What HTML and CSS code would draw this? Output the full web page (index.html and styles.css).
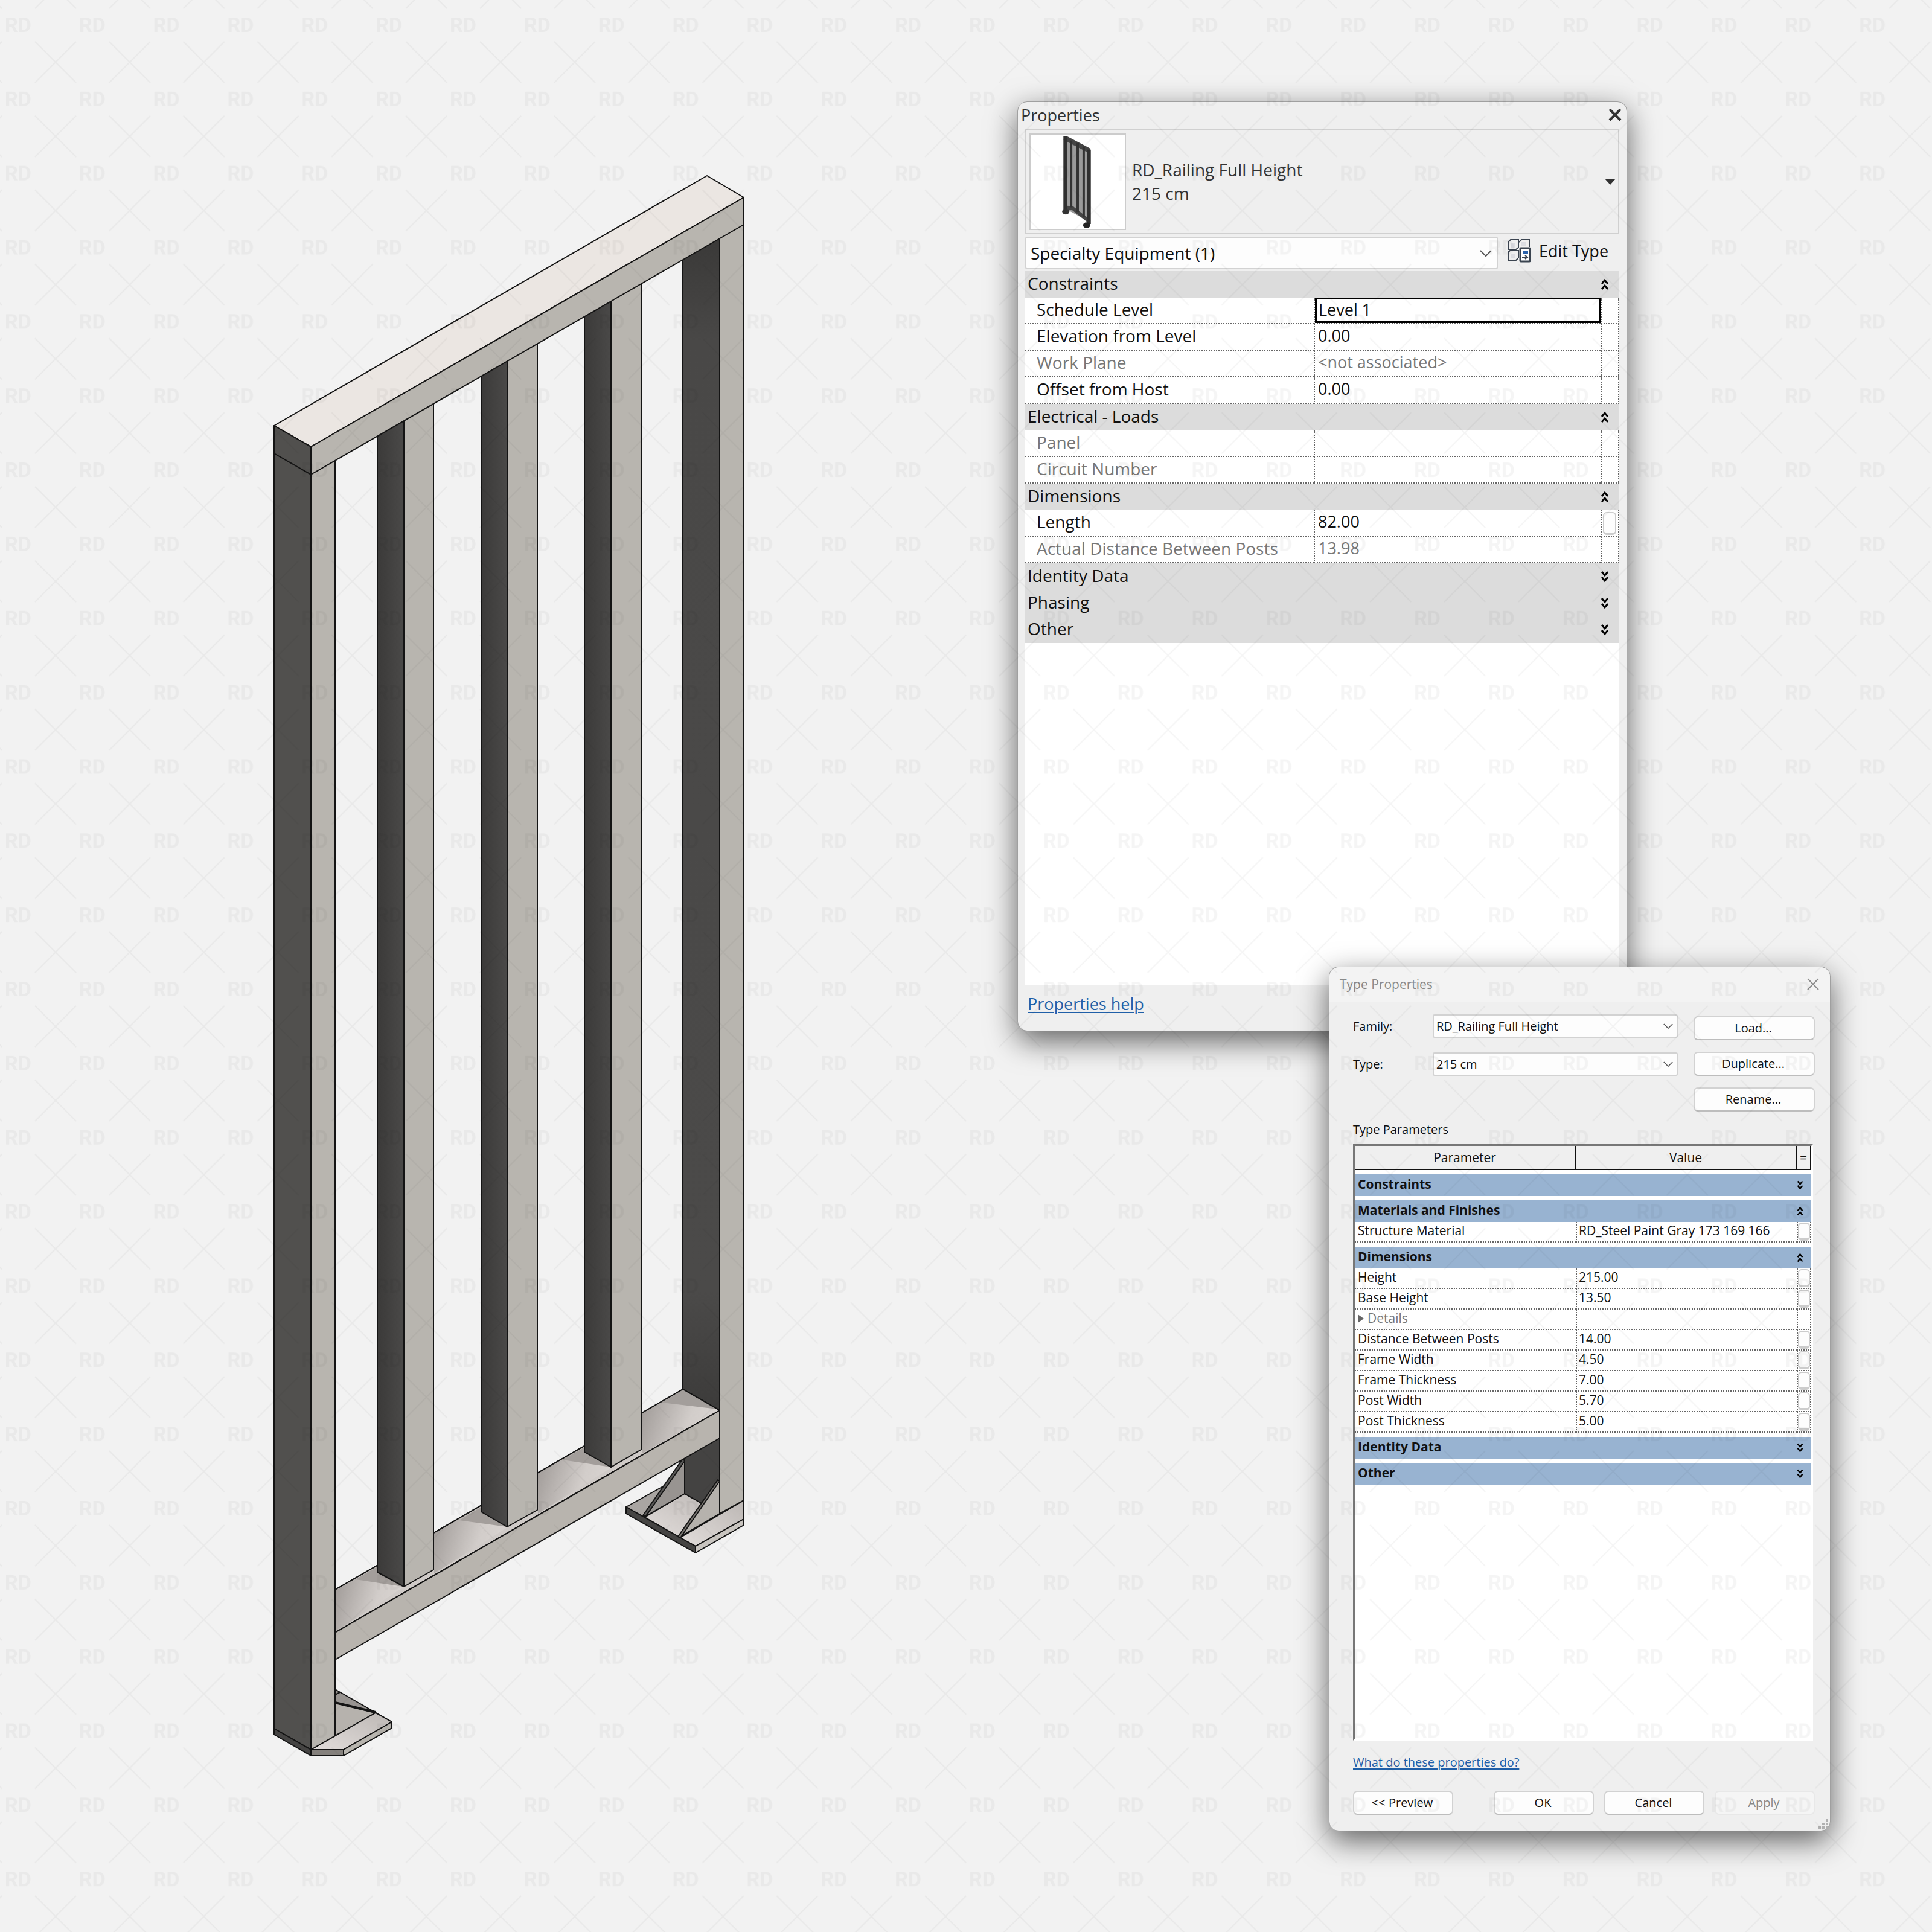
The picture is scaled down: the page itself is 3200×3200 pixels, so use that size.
FILE: index.html
```html
<!DOCTYPE html>
<html lang="en">
<head>
    <meta charset="UTF-8">
    <meta name="viewport" content="width=device-width, initial-scale=1.0">
    <title>RD_Railing Full Height</title>
    <link rel="stylesheet" href="styles.css">
</head>
<body>
    <!-- Shared icons -->
    <svg class="sprite" aria-hidden="true">
        <symbol id="collapse" viewBox="0 0 14 20" preserveAspectRatio="none">
            <path d="M2 9 L7 3 L12 9 M2 18 L7 12 L12 18" fill="none" stroke="#000" stroke-width="3"/>
        </symbol>
        <symbol id="expand" viewBox="0 0 14 20" preserveAspectRatio="none">
            <path d="M2 2 L7 8 L12 2 M2 11 L7 17 L12 11" fill="none" stroke="#000" stroke-width="3"/>
        </symbol>
        <symbol id="caret" viewBox="0 0 20 12">
            <path d="M1 1 L10 10 L19 1" fill="none" stroke="#555" stroke-width="2"/>
        </symbol>
    </svg>

    <main class="scene">
        <!-- 3D view of the railing -->
        <svg class="railing" viewBox="440 280 800 2640" role="img" aria-label="Full height railing">
            <defs>
                <linearGradient id="dark" x1="0" x2="1" y1="0" y2="0">
                    <stop offset="0" stop-color="#3b3a39"/>
                    <stop offset="1" stop-color="#4a4948"/>
                </linearGradient>
                <linearGradient id="post" x1="0" x2="0" y1="0" y2="1">
                    <stop offset="0" stop-color="#383736"/>
                    <stop offset="0.1" stop-color="#494847"/>
                    <stop offset="0.9" stop-color="#4b4a49"/>
                    <stop offset="1" stop-color="#3c3b3a"/>
                </linearGradient>
                <linearGradient id="ledge" x1="0" x2="1" y1="0" y2="0.3">
                    <stop offset="0" stop-color="#9b9693"/>
                    <stop offset="0.7" stop-color="#d2cdca"/>
                    <stop offset="1" stop-color="#d8d3d0"/>
                </linearGradient>
                <linearGradient id="plate" x1="0" x2="1" y1="1" y2="0">
                    <stop offset="0" stop-color="#e2dddb"/>
                    <stop offset="1" stop-color="#bcb7b4"/>
                </linearGradient>
            </defs>
            <g stroke="#141414" stroke-width="2" stroke-linejoin="round">
                <!-- right base -->
                <path d="M1037 2496 L1134 2442 L1232 2485 L1232 2516 L1152 2561 Z" fill="#a9a5a2"/>
                <path d="M1068 2513 L1134 2474 L1192 2507 L1126 2547 Z" fill="url(#plate)"/>
                <path d="M1126 2547 L1232 2485 L1232 2516 L1152 2561 Z" fill="url(#plate)"/>
                <path d="M1037 2496 L1152 2561 L1152 2572 L1037 2507 Z" fill="#454443"/>
                <path d="M1152 2561 L1232 2516 L1232 2526 L1152 2572 Z" fill="#c9c5c0"/>
                <!-- right post -->
                <path d="M1134 2300 L1192 2300 L1192 2507 L1134 2474 Z" fill="#444342"/>
                <path d="M1131 410 L1192 370 L1192 2336 L1131 2301 Z" fill="url(#post)"/>
                <path d="M1134 2416 L1134 2474 L1070 2511 Z" fill="#989491"/>
                <path d="M1131 2416 L1134 2420 L1069 2512 L1065 2510 Z" fill="#5a5958"/>
                <path d="M1192 2451 L1192 2507 L1127 2545 Z" fill="#b6b2ad"/>
                <path d="M1189 2451 L1192 2453 L1127 2547 L1123 2545 Z" fill="#77736f"/>
                <path d="M1192 370 L1232 350 L1232 2485 L1192 2507 Z" fill="#b8b5af"/>
                <!-- left base -->
                <path d="M555 2798 L649 2852 L649 2862 L569 2908 L515 2908 L555 2830 Z" fill="#989491"/>
                <path d="M555 2820 L622 2837 L555 2875 L515 2898 Z" fill="#b6b2ad"/>
                <path d="M555 2820 L622 2836" stroke-width="4"/>
                <path d="M555 2807 L563 2803" />
                <path d="M515 2898 L622 2837 L649 2852 L569 2898 Z" fill="url(#plate)"/>
                <path d="M569 2898 L649 2852 L649 2862 L569 2908 Z" fill="#b8b5af"/>
                <path d="M515 2898 L569 2898 L569 2908 L515 2908 Z" fill="#85817d"/>
                <!-- bottom rail -->
                <path d="M555 2633 L1131 2301 L1192 2336 L555 2704 Z" fill="#d0cbc8"/>
                <g stroke="none">
                    <path d="M556 2634 L626 2594 L668 2629 L556 2702 Z" fill="url(#ledge)"/>
                    <path d="M719 2540 L797 2494 L840 2530 L719 2606 Z" fill="url(#ledge)"/>
                    <path d="M891 2440 L968 2396 L1012 2431 L891 2507 Z" fill="url(#ledge)"/>
                    <path d="M1063 2341 L1131 2302 L1190 2336 L1063 2408 Z" fill="url(#ledge)"/>
                    <path d="M589 2616 L626 2594 L668 2628 Z" fill="#a39e9b"/>
                    <path d="M761 2518 L797 2496 L840 2529 Z" fill="#a39e9b"/>
                    <path d="M932 2418 L968 2397 L1012 2430 Z" fill="#a39e9b"/>
                    <path d="M1096 2323 L1131 2302 L1189 2334 Z" fill="#a39e9b"/>
                </g>
                <path d="M555 2633 L1131 2301 L1192 2336 L555 2704 Z" fill="none"/>
                <path d="M555 2704 L1192 2336 L1192 2382 L555 2749 Z" fill="#b8b4ae"/>
                <!-- balusters -->
                <path d="M625 700 L669 690 L669 2628 L625 2604 Z" fill="url(#dark)"/>
                <path d="M669 690 L718 660 L718 2600 L669 2628 Z" fill="#b8b5af"/>
                <path d="M797 600 L840 580 L840 2529 L797 2504 Z" fill="url(#dark)"/>
                <path d="M840 580 L890 560 L890 2501 L840 2529 Z" fill="#b8b5af"/>
                <path d="M968 500 L1012 480 L1012 2430 L968 2405 Z" fill="url(#dark)"/>
                <path d="M1012 480 L1062 460 L1062 2401 L1012 2430 Z" fill="#b8b5af"/>
                <!-- left post -->
                <path d="M454 750 L515 785 L515 2898 L454 2863 Z" fill="#51504e"/>
                <path d="M515 785 L555 760 L555 2875 L515 2898 Z" fill="#b8b5af"/>
                <path d="M454 2863 L515 2898 L515 2908 L454 2873 Z" fill="#454443"/>
                <!-- top rail -->
                <path d="M454 705 L1171 291 L1232 327 L515 740 Z" fill="#ebe6e2"/>
                <path d="M515 740 L1232 327 L1232 372 L515 786 Z" fill="#b8b5af"/>
                <path d="M454 705 L515 740 L515 786 L454 751 Z" fill="#51504e"/>
            </g>
        </svg>

        <!-- Properties palette -->
        <section class="window properties">
            <header class="palette-title">
                <h2>Properties</h2>
                <button class="close" aria-label="Close">
                    <svg width="22" height="20" viewBox="0 0 22 20"><path d="M2 1 L20 19 M20 1 L2 19" stroke="#333" stroke-width="4"/></svg>
                </button>
            </header>

            <button class="type-selector">
                <span class="thumb">
                    <svg viewBox="0 0 158 158" aria-hidden="true">
                        <path d="M58 4 L98 26 L98 146 L58 124 Z" fill="#9a9a9a"/>
                        <path d="M57 5 L99 27" stroke="#444" stroke-width="8"/>
                        <path d="M57 122 L70 123 L99 146" fill="none" stroke="#444" stroke-width="6"/>
                        <path d="M58 2 V130 M98 25 V150" stroke="#2f2f2f" stroke-width="6"/>
                        <path d="M68 10 V122 M79 14 V130 M89 20 V138" stroke="#333" stroke-width="4"/>
                        <ellipse cx="59" cy="129" rx="6" ry="5" fill="#333"/>
                        <ellipse cx="94" cy="152" rx="6" ry="5" fill="#222"/>
                    </svg>
                </span>
                <span class="type-name">RD_Railing Full Height<br>215 cm</span>
                <svg class="arrow" width="18" height="10" viewBox="0 0 18 10"><path d="M0 0 H18 L9 10 Z" fill="#333"/></svg>
            </button>

            <div class="filter-row">
                <span class="select filter">
                    <select aria-label="Category filter"><option>Specialty Equipment (1)</option></select>
                    <svg><use href="#caret"/></svg>
                </span>
                <button class="edit-type">
                    <svg width="38" height="40" viewBox="0 0 38 40" aria-hidden="true">
                        <g fill="none" stroke="#3b4450" stroke-width="2">
                            <path d="M5 2 H18 V15 L14 18 H1 V6 Z M23 2 H36 V14 M23 2 L19 6 M1 21 V36 H14 L17 33 M1 23 L4 20 H14 L18 20 V33"/>
                            <rect x="21" y="16" width="16" height="22" rx="1" fill="#fff" stroke-width="3"/>
                        </g>
                        <path d="M5 8 H12 V15 H5 Z M5 26 H12 V33 H5 Z M23 6 H31 V13 H23 Z" fill="#dcdde2"/>
                        <rect x="25" y="20" width="9" height="5" fill="#2a62ab"/>
                        <path d="M24 31 H34 M29 28 L33 31 L29 34" fill="none" stroke="#3b4450" stroke-width="2"/>
                    </svg>
                    Edit Type
                </button>
            </div>

            <div class="list">
                <table class="instance">
                    <colgroup><col class="c-name"><col class="c-value"><col class="c-tool"></colgroup>
                    <tbody>
                        <tr class="group"><th colspan="2">Constraints</th><td><button aria-label="Collapse"><svg><use href="#collapse"/></svg></button></td></tr>
                        <tr><th>Schedule Level</th><td class="active"><input type="text" value="Level 1" aria-label="Schedule Level"></td><td></td></tr>
                        <tr><th>Elevation from Level</th><td>0.00</td><td></td></tr>
                        <tr class="off"><th>Work Plane</th><td>&lt;not associated&gt;</td><td></td></tr>
                        <tr><th>Offset from Host</th><td>0.00</td><td></td></tr>
                        <tr class="group"><th colspan="2">Electrical - Loads</th><td><button aria-label="Collapse"><svg><use href="#collapse"/></svg></button></td></tr>
                        <tr class="off"><th>Panel</th><td></td><td></td></tr>
                        <tr class="off"><th>Circuit Number</th><td></td><td></td></tr>
                        <tr class="group"><th colspan="2">Dimensions</th><td><button aria-label="Collapse"><svg><use href="#collapse"/></svg></button></td></tr>
                        <tr><th>Length</th><td>82.00</td><td><button class="link-param" aria-label="Associate parameter"></button></td></tr>
                        <tr class="off"><th>Actual Distance Between Posts</th><td>13.98</td><td></td></tr>
                        <tr class="group"><th colspan="2">Identity Data</th><td><button aria-label="Expand"><svg><use href="#expand"/></svg></button></td></tr>
                        <tr class="group"><th colspan="2">Phasing</th><td><button aria-label="Expand"><svg><use href="#expand"/></svg></button></td></tr>
                        <tr class="group"><th colspan="2">Other</th><td><button aria-label="Expand"><svg><use href="#expand"/></svg></button></td></tr>
                    </tbody>
                </table>
            </div>

            <footer class="palette-footer">
                <a href="#">Properties help</a>
            </footer>
        </section>

        <!-- Type Properties dialog -->
        <section class="window type-dialog">
            <header class="dialog-title">
                <h2>Type Properties</h2>
                <button class="close" aria-label="Close">
                    <svg width="20" height="20" viewBox="0 0 20 20"><path d="M1 1 L19 19 M19 1 L1 19" stroke="#8a8a8a" stroke-width="2"/></svg>
                </button>
            </header>

            <div class="dialog-body">
                <div class="type-form">
                    <div class="fields">
                        <label for="family">Family:</label>
                        <span class="select">
                            <select id="family"><option>RD_Railing Full Height</option></select>
                            <svg><use href="#caret"/></svg>
                        </span>
                        <label for="type">Type:</label>
                        <span class="select">
                            <select id="type"><option>215 cm</option></select>
                            <svg><use href="#caret"/></svg>
                        </span>
                    </div>
                    <div class="actions">
                        <button class="button">Load...</button>
                        <button class="button">Duplicate...</button>
                        <button class="button">Rename...</button>
                    </div>
                </div>

                <h3>Type Parameters</h3>
                <div class="frame">
                    <table class="params">
                        <colgroup><col class="c-name"><col class="c-value"><col class="c-tool"></colgroup>
                        <thead>
                            <tr><th>Parameter</th><th>Value</th><th>=</th></tr>
                        </thead>
                        <tbody>
                            <tr class="gap"><td colspan="3"></td></tr>
                            <tr class="group"><th colspan="2">Constraints</th><td><button aria-label="Expand"><svg><use href="#expand"/></svg></button></td></tr>
                            <tr class="gap"><td colspan="3"></td></tr>
                            <tr class="group"><th colspan="2">Materials and Finishes</th><td><button aria-label="Collapse"><svg><use href="#collapse"/></svg></button></td></tr>
                            <tr><th>Structure Material</th><td>RD_Steel Paint Gray 173 169 166</td><td><button class="link-param" aria-label="Associate parameter"></button></td></tr>
                            <tr class="gap"><td colspan="3"></td></tr>
                            <tr class="group"><th colspan="2">Dimensions</th><td><button aria-label="Collapse"><svg><use href="#collapse"/></svg></button></td></tr>
                            <tr><th>Height</th><td>215.00</td><td><button class="link-param" aria-label="Associate parameter"></button></td></tr>
                            <tr><th>Base Height</th><td>13.50</td><td><button class="link-param" aria-label="Associate parameter"></button></td></tr>
                            <tr class="off"><th><svg class="sub" viewBox="0 0 10 14"><path d="M0 0 L10 7 L0 14 Z" fill="#666"/></svg>Details</th><td></td><td></td></tr>
                            <tr><th>Distance Between Posts</th><td>14.00</td><td><button class="link-param" aria-label="Associate parameter"></button></td></tr>
                            <tr><th>Frame Width</th><td>4.50</td><td><button class="link-param" aria-label="Associate parameter"></button></td></tr>
                            <tr><th>Frame Thickness</th><td>7.00</td><td><button class="link-param" aria-label="Associate parameter"></button></td></tr>
                            <tr><th>Post Width</th><td>5.70</td><td><button class="link-param" aria-label="Associate parameter"></button></td></tr>
                            <tr><th>Post Thickness</th><td>5.00</td><td><button class="link-param" aria-label="Associate parameter"></button></td></tr>
                            <tr class="gap"><td colspan="3"></td></tr>
                            <tr class="group"><th colspan="2">Identity Data</th><td><button aria-label="Expand"><svg><use href="#expand"/></svg></button></td></tr>
                            <tr class="gap"><td colspan="3"></td></tr>
                            <tr class="group"><th colspan="2">Other</th><td><button aria-label="Expand"><svg><use href="#expand"/></svg></button></td></tr>
                        </tbody>
                    </table>
                </div>

                <a class="help" href="#">What do these properties do?</a>

                <div class="dialog-buttons">
                    <button class="button preview">&lt;&lt; Preview</button>
                    <button class="button">OK</button>
                    <button class="button">Cancel</button>
                    <button class="button" disabled>Apply</button>
                </div>
            </div>
            <svg class="grip" viewBox="0 0 16 16" aria-hidden="true">
                <path d="M12 0h4v4h-4z M12 6h4v4h-4z M6 6h4v4h-4z M12 12h4v4h-4z M6 12h4v4h-4z M0 12h4v4h-4z" fill="#b0b0b0"/>
            </svg>
        </section>

        <!-- Watermark over everything -->
        <svg class="watermark" aria-hidden="true">
            <defs>
                <pattern id="rd" x="5" y="20" width="122.85" height="122.85" patternUnits="userSpaceOnUse">
                    <text x="3" y="33">RD</text>
                    <path d="M53 49 L121 117 M121 49 L53 117"/>
                </pattern>
            </defs>
            <rect width="100%" height="100%" fill="url(#rd)"/>
        </svg>
    </main>
</body>
</html>
```
FILE: styles.css
```css
* {
    box-sizing: border-box;
}

body {
    margin: 0;
    background: #f2f2f2;
    color: #111;
    font-family: 'Open Sans', 'Noto Sans', sans-serif;
    font-size: 27px;
}

button, select, input {
    font: inherit;
    color: inherit;
}

button {
    padding: 0;
    border: 0;
    background: none;
    cursor: pointer;
}

h2, h3 {
    margin: 0;
    font-size: inherit;
    font-weight: normal;
}

a {
    color: #1f5fa8;
    text-underline-offset: 3px;
}

.sprite {
    position: absolute;
    width: 0;
    height: 0;
}

.scene {
    position: relative;
    min-height: 100vh;
    overflow: hidden;
}

.railing {
    position: absolute;
    left: 440px;
    top: 280px;
    width: 800px;
}

.watermark {
    position: absolute;
    inset: 0;
    width: 100%;
    height: 100%;
    pointer-events: none;
}

.watermark text {
    font-family: Roboto, sans-serif;
    font-size: 34px;
    font-weight: bold;
    fill: #000;
    fill-opacity: 0.04;
}

.watermark path {
    stroke: #000;
    stroke-opacity: 0.04;
    stroke-width: 2;
}

/* Windows */
.window {
    position: absolute;
    display: flex;
    flex-direction: column;
    background: #efefef;
    border: 1px solid #a0a0a0;
    border-radius: 16px;
    box-shadow: 0 16px 50px rgba(0, 0, 0, 0.6);
}

.properties {
    left: 1685px;
    top: 168px;
    width: 1010px;
    min-height: 1540px;
}

.type-dialog {
    left: 2201px;
    top: 1601px;
    width: 831px;
    min-height: 1432px;
    font-size: 20px;
}

.close {
    display: flex;
}

/* Properties palette */
.palette-title {
    display: flex;
    align-items: center;
    justify-content: space-between;
    height: 44px;
    padding: 0 8px 2px 5px;
    color: #333;
}

.type-selector {
    display: flex;
    align-items: center;
    height: 175px;
    margin: 0 12px;
    padding: 0 4px 0 5px;
    border: 2px solid #d0d0d0;
    font-size: 28px;
    text-align: left;
    color: #333;
}

.thumb {
    width: 160px;
    height: 160px;
    border: 2px solid #ccc;
    background: #fff;
}

.thumb svg {
    display: block;
    width: 100%;
}

.type-name {
    flex: 1;
    padding-left: 10px;
    line-height: 39px;
}

.filter-row {
    display: flex;
    margin: 4px 12px 3px;
}

.select {
    position: relative;
    display: block;
}

.select select {
    display: block;
    width: 100%;
    height: 100%;
    padding: 0 4px;
    border: 2px solid #d2d2d2;
    border-radius: 3px;
    background: #fdfdfd;
    appearance: none;
}

.select svg {
    position: absolute;
    right: 8px;
    top: 50%;
    width: 16px;
    height: 10px;
    margin-top: -5px;
    pointer-events: none;
}

.filter {
    width: 783px;
    height: 54px;
    font-size: 28px;
}

.filter select {
    padding: 0 7px;
}

.filter svg {
    right: 10px;
    width: 20px;
    height: 12px;
}

.edit-type {
    display: flex;
    align-items: center;
    gap: 14px;
    height: 46px;
    padding-left: 16px;
}

.list {
    flex: 1;
    margin: 0 12px;
    background: #fff;
}

table {
    width: 100%;
    border-collapse: separate;
    border-spacing: 0;
    table-layout: fixed;
}

th, td {
    padding: 0 5px 5px 5px;
    font-weight: normal;
    line-height: 30px;
    text-align: left;
    white-space: nowrap;
}

tbody th, tbody td {
    border-bottom: 2px dotted #666;
}

tbody td {
    border-left: 2px dotted #666;
}

tbody td:last-child {
    border-right: 2px dotted #666;
    padding: 0;
}

.off {
    color: #777;
}

.group th, .group td, .group td:last-child {
    border: 0;
}

.group button {
    display: flex;
}

.link-param {
    display: block;
    border: 2px solid #ccc;
    border-bottom-width: 4px;
    border-radius: 6px;
    background: #fdfdfd;
}

.instance .c-value {
    width: 475px;
}

.instance .c-tool {
    width: 31px;
}

.instance tr {
    height: 44px;
}

.instance th {
    padding-left: 19px;
    font-size: 28px;
}

.instance .group th {
    padding: 0 4px 4px;
}

.instance .group {
    background: #dcdcdc;
}

.instance .group svg {
    width: 14px;
    height: 20px;
}

.instance .link-param {
    width: 22px;
    height: 38px;
    margin: 2px 0 0 2px;
}

.instance .active {
    padding: 0;
}

.active input {
    display: block;
    width: 100%;
    height: 42px;
    padding: 0 3px 4px;
    border: 3px solid #000;
    background: #fff;
}

.palette-footer {
    height: 75px;
    padding: 12px 16px;
}

/* Type Properties dialog */
.dialog-title {
    display: flex;
    align-items: center;
    justify-content: space-between;
    height: 58px;
    padding: 0 18px 3px 17px;
    border-radius: 16px 16px 0 0;
    background: #f3f3f3;
    color: #8a8a8a;
    font-size: 21px;
}

.dialog-body {
    flex: 1;
    display: flex;
    flex-direction: column;
    padding: 0 25px 26px 39px;
}

.type-form {
    display: flex;
    gap: 26px;
    padding-top: 20px;
}

.fields {
    flex: 1;
    display: grid;
    grid-template-columns: 132px 1fr;
    grid-auto-rows: 39px;
    row-gap: 24px;
    align-items: center;
}

.fields .select {
    height: 39px;
}

.actions {
    display: flex;
    flex-direction: column;
    gap: 19px;
    width: 201px;
    padding-top: 3px;
}

.button {
    height: 40px;
    padding: 0 3px 2px 0;
    border: 2px solid #d2d2d2;
    border-bottom-color: #bdbdbd;
    border-radius: 7px;
    background: #fdfdfd;
}

.button:disabled {
    border-color: #e8e8e8;
    background: #f5f5f5;
    color: #888;
}

.type-dialog h3 {
    margin: 15px 0 9px;
    line-height: 30px;
}

.frame {
    flex: 1;
    margin-right: 3px;
    border: 3px solid #fff;
    border-top-color: #777;
    border-left-color: #777;
    background: #fff;
    font-size: 21px;
}

.params .c-value {
    width: 366px;
}

.params .c-tool {
    width: 24px;
}

.params thead th {
    height: 40px;
    padding: 0;
    border-right: 2px solid #111;
    border-bottom: 2px solid #111;
    background: #efefef;
    text-align: center;
}

.params tr {
    height: 34px;
}

.params tbody th {
    padding: 0 5px 4px;
    line-height: 26px;
}

.params tbody td {
    padding: 0 0 4px 3px;
    line-height: 26px;
}

.params tbody td:last-child {
    padding: 0;
}

.params .group {
    height: 36px;
    background: #98b3d1;
}

.params .group th {
    font-weight: bold;
}

.params .group svg {
    width: 11px;
    height: 16px;
}

.params .gap {
    height: 7px;
}

.params .gap td:last-child {
    padding: 0;
    border: 0;
    line-height: 0;
}

.params .link-param {
    width: 20px;
    height: 30px;
}

.sub {
    width: 10px;
    height: 14px;
    margin-right: 6px;
}

.help {
    align-self: flex-start;
    margin: 21px 0 32px;
    line-height: 30px;
}

.dialog-buttons {
    display: flex;
    gap: 17px;
}

.dialog-buttons .button {
    width: 166px;
}

.dialog-buttons .preview {
    margin-right: auto;
}

.grip {
    position: absolute;
    right: 3px;
    bottom: 3px;
    width: 16px;
    height: 16px;
}
```
